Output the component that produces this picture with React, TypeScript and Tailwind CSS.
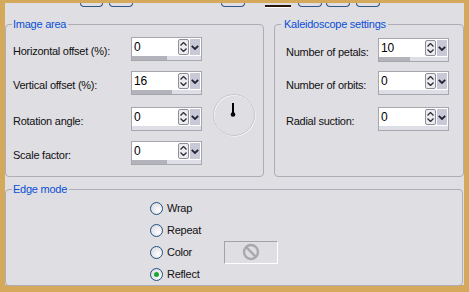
import type { ReactNode } from 'react'

function Spin({ value, fill }: { value: string; fill: number }) {
  return (
    <div className="flex h-[24px] w-[71px] flex-col border border-[#a7a6ae] bg-white">
      <div className="flex h-[18px]">
        <div className="flex flex-1 items-center pl-[2px] text-[12px] leading-none text-black">{value}</div>
        <div className="my-[1px] flex w-[11px] flex-col items-center justify-center gap-[2px] rounded-[2px] border border-[#8e8e98] bg-[#ececf0]">
          <svg width="7" height="4" viewBox="0 0 7 4">
            <path d="M0.5 3.5 L3.5 0.5 L6.5 3.5" fill="none" stroke="#2c2c36" strokeWidth="1.3" />
          </svg>
          <svg width="7" height="4" viewBox="0 0 7 4">
            <path d="M0.5 0.5 L3.5 3.5 L6.5 0.5" fill="none" stroke="#2c2c36" strokeWidth="1.3" />
          </svg>
        </div>
        <div className="my-[1px] ml-[1px] mr-[1px] flex w-[10px] items-center justify-center bg-[#c8c8d6]">
          <svg width="8" height="5" viewBox="0 0 8 5">
            <path d="M0.8 0.8 L4 4 L7.2 0.8" fill="none" stroke="#23233a" strokeWidth="1.8" />
          </svg>
        </div>
      </div>
      <div className="flex h-[4px] bg-[#dedee6]">
        <div className="bg-[#b3b3bc]" style={{ width: fill }} />
      </div>
    </div>
  )
}

function Row({ label, value, fill, labelWidth }: { label: string; value: string; fill: number; labelWidth: string }) {
  return (
    <div className="flex h-[24px] items-center">
      <span className={`${labelWidth} pt-[4px]`}>{label}</span>
      <Spin value={value} fill={fill} />
    </div>
  )
}

function Radio({ label, checked, children }: { label: string; checked?: boolean; children?: ReactNode }) {
  return (
    <div className="flex h-[22px] items-center">
      <span className="flex h-[13px] w-[13px] items-center justify-center rounded-full border border-[#1d5282] bg-[radial-gradient(circle_at_65%_65%,#ffffff,#d2d2da)]">
        {checked && <span className="h-[5px] w-[5px] rounded-full bg-[#22a52e]" />}
      </span>
      <span className="ml-[4px] w-[57px]">{label}</span>
      {children}
    </div>
  )
}

export default function App() {
  return (
    <div className="h-[292px] w-[469px] bg-[#d5a95b] p-[5px] text-[11px] leading-[13px] tracking-[-0.25px] text-[#111] font-['Liberation_Sans',Arial,sans-serif]">
      <div className="h-[282px] w-[459px] bg-[#dfdee3]">
        {/* top tab buttons (cut off) */}
        <div className="-mt-[2px] flex h-[15px] items-start">
          <div className="ml-[75px] h-[4px] w-[23px] rounded-b-[4px] border-x border-b border-[#31568a]" />
          <div className="ml-[6px] h-[4px] w-[24px] rounded-b-[4px] border-x border-b border-[#31568a]" />
          <div className="ml-[88px] h-[4px] w-[24px] rounded-b-[4px] border-x border-b border-[#31568a]" />
          <div className="ml-[20px] mt-[2px] h-[3px] w-[26px] border-t-2 border-[#2a1608] bg-white" />
          <div className="ml-[7px] h-[4px] w-[24px] rounded-b-[4px] border-x border-b border-[#31568a]" />
          <div className="ml-[4px] h-[4px] w-[24px] rounded-b-[4px] border-x border-b border-[#31568a]" />
          <div className="ml-[6px] h-[4px] w-[24px] rounded-b-[4px] border-x border-b border-[#31568a]" />
        </div>

        <div className="flex">
          <fieldset className="h-[159px] w-[259px] rounded-[4px] border border-[#aeadb5]">
            <legend className="ml-[6px] pl-[1px] pr-[2px] text-[#0a4fd6]">Image area</legend>
            <div className="flex">
              <div className="flex flex-col pl-[7px]">
                <div className="mt-[6px]">
                  <Row label="Horizontal offset (%):" value="0" fill={35} labelWidth="w-[118px]" />
                </div>
                <div className="mt-[10px]">
                  <Row label="Vertical offset (%):" value="16" fill={40} labelWidth="w-[118px]" />
                </div>
                <div className="mt-[12px]">
                  <Row label="Rotation angle:" value="0" fill={0} labelWidth="w-[118px]" />
                </div>
                <div className="mt-[10px]">
                  <Row label="Scale factor:" value="0" fill={35} labelWidth="w-[118px]" />
                </div>
              </div>
              <svg className="ml-[10px] mt-[62px]" width="44" height="44" viewBox="0 0 44 44">
                <circle cx="22.6" cy="22.6" r="20.5" fill="none" stroke="#ffffff" strokeWidth="1" />
                <circle cx="22" cy="22" r="20.5" fill="none" stroke="#c6c6cc" strokeWidth="1" />
                <line x1="21" y1="10" x2="21" y2="21" stroke="#000" strokeWidth="2" />
                <circle cx="21" cy="21.5" r="2.3" fill="#000" />
              </svg>
            </div>
          </fieldset>

          <fieldset className="ml-[10px] h-[159px] w-[190px] rounded-[4px] border border-[#aeadb5]">
            <legend className="ml-[6px] pl-[3px] pr-[2px] text-[#0a4fd6]">Kaleidoscope settings</legend>
            <div className="flex flex-col pl-[11px]">
              <div className="mt-[7px]">
                <Row label="Number of petals:" value="10" fill={31} labelWidth="w-[92px]" />
              </div>
              <div className="mt-[9px]">
                <Row label="Number of orbits:" value="0" fill={0} labelWidth="w-[92px]" />
              </div>
              <div className="mt-[12px]">
                <Row label="Radial suction:" value="0" fill={0} labelWidth="w-[92px]" />
              </div>
            </div>
          </fieldset>
        </div>

        <fieldset className="mt-[6px] h-[103px] w-[458px] rounded-[4px] border border-[#aeadb5]">
          <legend className="ml-[6px] pl-[1px] pr-[2px] text-[#0a4fd6]">Edge mode</legend>
          <div className="flex flex-col pl-[144px] pt-[1px]">
            <Radio label="Wrap" />
            <Radio label="Repeat" />
            <Radio label="Color">
              <div className="flex h-[23px] w-[54px] items-center justify-center border border-b-white border-l-[#a2a2a8] border-r-white border-t-[#a2a2a8]">
                <svg width="18" height="18" viewBox="0 0 18 18">
                  <circle cx="9" cy="9" r="7" fill="none" stroke="#a9a9ad" strokeWidth="2.4" />
                  <line x1="4.2" y1="4.2" x2="13.8" y2="13.8" stroke="#a9a9ad" strokeWidth="2.4" />
                </svg>
              </div>
            </Radio>
            <Radio label="Reflect" checked />
          </div>
        </fieldset>
      </div>
    </div>
  )
}
